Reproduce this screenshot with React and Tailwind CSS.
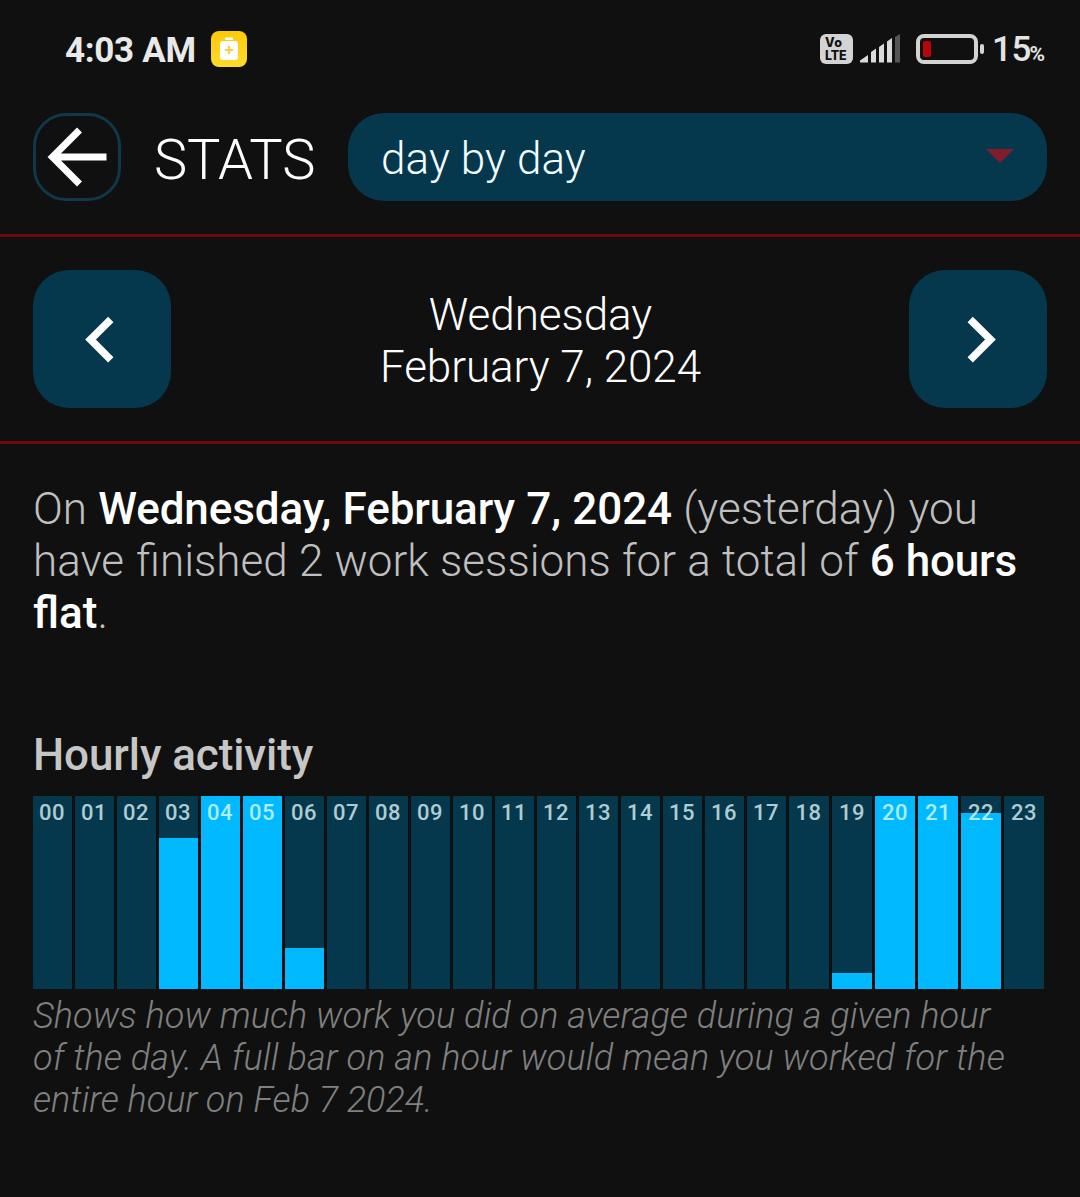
const hours = [
  0, 0, 0, 151, 193, 193, 41, 0, 0, 0, 0, 0, 0, 0, 0, 0, 0, 0, 0, 16, 193, 193, 176, 0,
];

function StatusBar() {
  return (
    <div className="flex h-[100px] items-center pl-[65px] pr-[34px]">
      <span className="w-[130px] whitespace-nowrap text-[35px] font-bold leading-none tracking-[-0.3px] text-[#e9e9e9]">4:03 AM</span>
      <svg className="ml-4 h-9 w-9 -translate-y-px" viewBox="0 0 36 36">
        <defs>
          <linearGradient id="amber" x1="0" y1="0" x2="0" y2="1">
            <stop offset="0" stopColor="#ffc90a" />
            <stop offset="1" stopColor="#ffdb2a" />
          </linearGradient>
        </defs>
        <rect width="36" height="36" rx="8" fill="url(#amber)" />
        <rect x="14" y="6.5" width="8" height="2.5" rx="1" fill="#fff" />
        <rect x="9" y="10" width="18" height="19" rx="3" fill="#fff" />
        <path d="M18 15v8M14 19h8" stroke="#f5cf45" strokeWidth="2.2" />
      </svg>
      <div className="ml-auto flex -translate-y-px items-center">
        <div className="flex h-[30px] w-[33px] flex-col justify-center rounded-[6px] bg-[#d3d3d3] pl-[5px] font-['Inter'] text-[12.5px] font-extrabold leading-[13px] text-[#111]">
          <span className="h-[13px] tracking-[0.5px]">Vo</span>
          <span className="h-[13px] tracking-[-0.2px]">LTE</span>
        </div>
        <svg className="ml-[7px] h-[30px] w-10" viewBox="0 0 40 30">
          <path d="M0 28.500V26.500L8 21v7.500zM11 28.500V18l5-3.500v14zM19 28.500V13l5-3.500v19zM27 28.500V7.500L32 4v24.500z" fill="#dadada" />
          <path d="M35 28.500V3l5-3v28.500z" fill="#555" />
        </svg>
        <svg className="ml-4 h-[30px] w-[68px]" viewBox="0 0 68 30">
          <rect x="2" y="2" width="58" height="26" rx="6" fill="none" stroke="#d3d3d3" strokeWidth="4" />
          <rect x="7" y="7" width="8" height="16" rx="2" fill="#b80505" />
          <rect x="64" y="10" width="4" height="10" rx="2" fill="#d3d3d3" />
        </svg>
        <span className="ml-2 flex w-[54px] items-baseline whitespace-nowrap font-medium leading-none text-[#e4e4e4]">
          <span className="w-[37.500px] text-[35px] tracking-[-0.5px]">15</span>
          <span className="text-[21px] font-bold">%</span>
        </span>
      </div>
    </div>
  );
}

function Header() {
  return (
    <header className="flex h-[137px] items-start border-b-[3px] border-[#6b0a0b] px-[33px] pt-[13px]">
      <button className="flex h-[88px] w-[88px] items-center justify-center rounded-[33px] border-[3px] border-[#10374a]">
        <svg className="h-[82px] w-[82px]" viewBox="36 116 82 82" fill="none" stroke="#fff" strokeWidth="7">
          <path d="M106.500 157H53M79.500 130L52.500 157L79.500 184" />
        </svg>
      </button>
      <h1 className="ml-[33px] w-[194px] whitespace-nowrap text-[56px] font-light leading-[94px] tracking-[-0.2px]">STATS</h1>
      <div className="flex h-[88px] flex-1 items-center justify-between rounded-[36px] bg-[#05384d] px-[33px]">
        <span className="pt-1 text-[44px] font-light leading-[52px] tracking-[0.1px] text-[#f4fdff]">day by day</span>
        <svg className="h-[14px] w-[28px] -translate-y-[1px]" viewBox="0 0 28 14">
          <path d="M0 0h28L14 14z" fill="#831c2a" />
        </svg>
      </div>
    </header>
  );
}

function DateNav() {
  return (
    <nav className="flex h-[207px] items-center justify-between border-b-[3px] border-[#6b0a0b] px-[33px]">
      <button className="flex h-[138px] w-[138px] items-center justify-center rounded-[36px] bg-[#05384d]">
        <svg className="h-[138px] w-[138px]" viewBox="0 0 138 138" fill="none" stroke="#fff" strokeWidth="7.500">
          <path d="M77.800 49.500L57.500 69.500L77.800 89.800" />
        </svg>
      </button>
      <div className="pl-px pt-1 text-center text-[44px] font-light leading-[52px] tracking-[-0.06px]">
        <div>Wednesday</div>
        <div>February 7, 2024</div>
      </div>
      <button className="flex h-[138px] w-[138px] items-center justify-center rounded-[36px] bg-[#05384d]">
        <svg className="h-[138px] w-[138px]" viewBox="0 0 138 138" fill="none" stroke="#fff" strokeWidth="7.500">
          <path d="M61.200 49.500L81.500 69.500L61.200 89.800" />
        </svg>
      </button>
    </nav>
  );
}

function HourBar({ hour, fill }) {
  return (
    <div className={`relative flex h-full flex-col justify-end bg-[#05384d] ${hour < 18 ? "w-[39px]" : "w-10"}`}>
      <div className="bg-[#00b9ff]" style={{ height: fill }} />
      <span className={`absolute inset-x-0 top-1 text-center text-[22px] font-medium leading-[26px] tracking-[0.5px] text-[#e6ffff]/75 ${hour < 19 ? "pr-px" : ""}`}>
        {String(hour).padStart(2, "0")}
      </span>
    </div>
  );
}

export default function App() {
  return (
    <div className="h-[1197px] w-[1080px] overflow-hidden bg-[#101010] font-['Roboto',sans-serif] text-white">
      <StatusBar />
      <Header />
      <DateNav />
      <main className="px-[33px] pt-[39px]">
        <p className="whitespace-nowrap text-[44px] font-light leading-[52px] text-[#bfbfbf]">
          <span className="[word-spacing:0.5px]">
            On <b className="font-medium tracking-[-0.1px] text-white">Wednesday, February 7, 2024</b> (yesterday) you
          </span>
          <br />
          <span className="[word-spacing:0.5px]">
            have <span className="ml-px">finished</span> 2 work sessions for a total of{" "}
            <b className="font-medium tracking-[-0.2px] text-white">6 hours</b>
          </span>
          <br />
          <b className="font-medium text-white">flat</b>.
        </p>
        <h2 className="mt-[90px] text-[44px] font-medium leading-[52px] tracking-[-0.1px] text-[#c6c6c6]">Hourly activity</h2>
        <div className="mt-[15px] flex h-[193px] gap-[3px]">
          {hours.map((fill, hour) => (
            <HourBar key={hour} hour={hour} fill={fill} />
          ))}
        </div>
        <p className="mt-[6px] whitespace-nowrap text-[36px] font-light italic leading-[42px] text-[#808080]">
          <span className="tracking-[0.07px]">Shows how much work you did on average during a given hour</span>
          <br />
          <span className="tracking-[0.12px]">of the day. A full bar on an hour would mean you worked for the</span>
          <br />
          entire hour on Feb 7 2024.
        </p>
      </main>
    </div>
  );
}
